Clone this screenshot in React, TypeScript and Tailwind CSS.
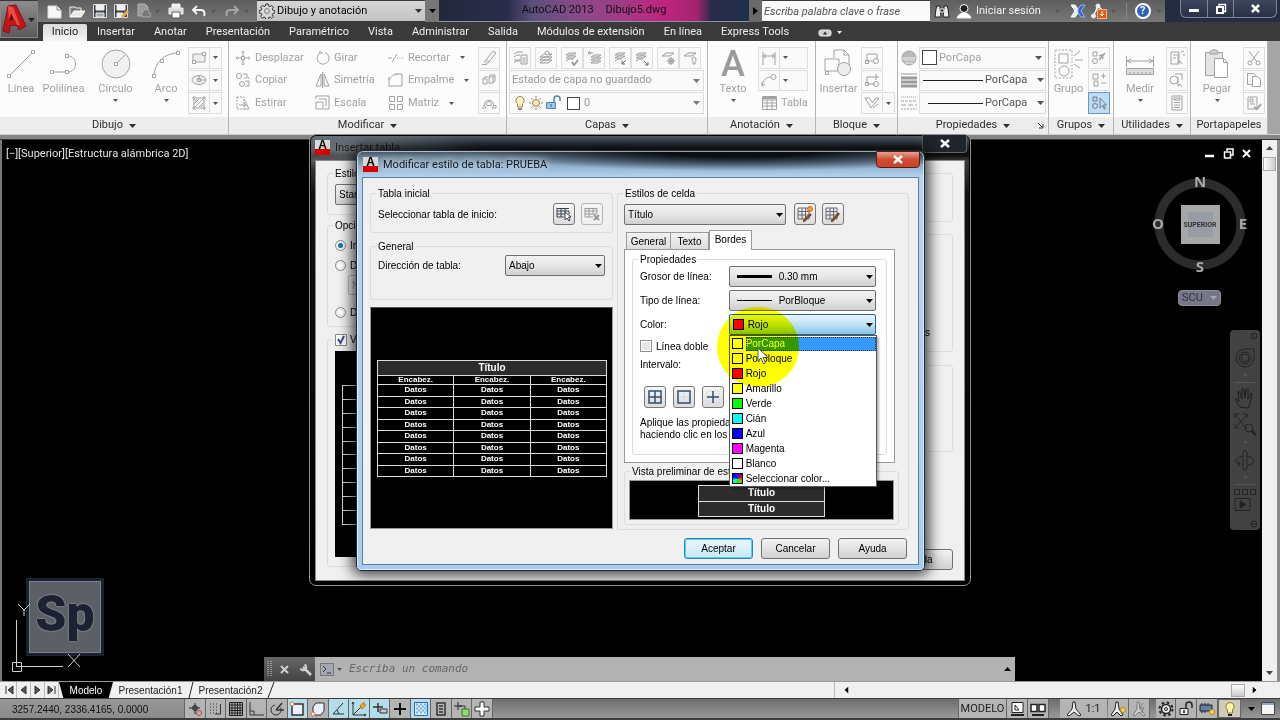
import { useState } from "react";
import type { ReactNode } from "react";

function Svg({ w = 16, h = 16, box, className = "", children }: { w?: number; h?: number; box?: string; className?: string; children: ReactNode }) {
  return (
    <svg width={w} height={h} viewBox={box ?? `0 0 ${w} ${h}`} fill="none" stroke="currentColor" strokeWidth="1" className={`shrink-0 ${className}`} aria-hidden="true">
      {children}
    </svg>
  );
}

function Caret({ className = "" }: { className?: string }) {
  return (
    <svg width="7" height="4" viewBox="0 0 7 4" className={`shrink-0 ${className}`} aria-hidden="true">
      <path d="M0 0h7L3.5 4z" fill="currentColor" />
    </svg>
  );
}

function SmallCaret() {
  return (
    <svg width="5" height="3" viewBox="0 0 5 3" className="shrink-0 text-[#555]" aria-hidden="true">
      <path d="M0 0h5L2.5 3z" fill="currentColor" />
    </svg>
  );
}

/* ---------- ribbon ---------- */

function Panel({ title, className, children, arrow = true, launcher = false }: { title: string; className: string; children: ReactNode; arrow?: boolean; launcher?: boolean }) {
  return (
    <section className={`flex shrink-0 flex-col border-r border-[#b4b4b4] ${className}`}>
      <div className="flex h-[76px] items-stretch pt-[6px] pb-[3px] text-[#a2a2a2]">{children}</div>
      <div className="relative flex h-[17px] items-center justify-center gap-[6px] bg-[#ededed] text-[#2e2e2e]">
        <span>{title}</span>
        {arrow && <Caret />}
        {launcher && (
          <Svg w={7} h={7} className="absolute right-1">
            <path d="M1 1l4 4M6 2v4H2" />
          </Svg>
        )}
      </div>
    </section>
  );
}

function BigTool({ label, icon, arrow = false, className = "" }: { label: string; icon: ReactNode; arrow?: boolean; className?: string }) {
  return (
    <button className={`flex flex-col items-center ${className}`}>
      <span className="flex h-[34px] items-center">{icon}</span>
      <span className="leading-[16px]">{label}</span>
      {arrow && <span className="mt-[2px]"><SmallCaret /></span>}
    </button>
  );
}

function Tool({ label, icon, arrow = false }: { label: string; icon: ReactNode; arrow?: boolean }) {
  return (
    <button className="flex items-center gap-[4px] text-left">
      {icon}
      <span>{label}</span>
      {arrow && <span className="ml-[6px]"><SmallCaret /></span>}
    </button>
  );
}

function Box({ name, children, arrow = false, active = false }: { name: string; children: ReactNode; arrow?: boolean; active?: boolean }) {
  return (
    <button aria-label={name} className={active ? "flex w-[22px] items-center border border-[#5d9bd0] bg-[#bfdcf3] text-[#6d7c8c]" : "flex items-center border border-[#dedede] bg-[#fafafa]"}>
      <span className="flex w-[20px] items-center justify-center">{children}</span>
      {arrow && <span className="flex w-[12px] items-center justify-center self-stretch border-l border-[#dedede]"><SmallCaret /></span>}
    </button>
  );
}

function Rows({ className = "", children }: { className?: string; children: ReactNode }) {
  return <div className={`grid grid-rows-3 gap-px ${className}`}>{children}</div>;
}

const layerIcons: [string, ReactNode, string][] = [
  ["Propiedades de capas", <><path d="M2 4l3-2h6M2 7l3-2h3M2 10h6M2 13l2-2h4" /><path d="M9 5h6v9H9zM10.500 8h3M10.500 10h3M10.500 12h3" /></>, "mr-1"],
  ["Definir como actual", <><path d="M2 7l4-3h8l-4 3zM2 10l4-3h8l-4 3zM2 13l4-3h8l-4 3z" /><circle cx="9" cy="3" r="2" fill="#fff" /></>, "mr-1"],
  ["Igualar", <><path d="M2 5l3-2h7l-3 2zM2 8l3-2h7l-3 2zM2 11l3-2h5" /><path d="M8 12l2 3 4-5" strokeWidth="2" /></>, ""],
  ["Anterior", <><path d="M5 7l3-2h7l-3 2zM5 10l3-2h7l-3 2zM5 13l3-2h7l-3 2z" /><path d="M5 4l-3-1 2-2M2 3h5" /></>, "mr-1"],
  ["Aislar", <><path d="M3 5l3-2h7l-3 2zM3 8l3-2h7l-3 2zM3 11l3-2h4" /><path d="M14 10l-4 4M10 11v3h3" stroke="#666" /></>, ""],
  ["Desaislar", <><path d="M2 5l3-2h7l-3 2zM2 8l3-2h7l-3 2zM2 11l3-2h4" /><path d="M10 11l4 4M14 12v3h-3" stroke="#666" /></>, "mr-1"],
  ["Inutilizar", <><path d="M2 6l4-3h8l-4 3z" /><circle cx="11" cy="11" r="2.500" /><path d="M11 7v8M7 11h8M8.500 8.500l5 5M13.500 8.500l-5 5" /></>, ""],
  ["Desactivar", <><path d="M2 6l4-3h8l-4 3z" /><path d="M12 7a2.500 2.500 0 011 4.500V14h-2v-2.500A2.500 2.500 0 0112 7z" /></>, ""],
];

function Ribbon() {
  return (
    <div className="flex border-b border-[#d0d0d0] bg-[#fcfcfc] text-[11px]">
      <Panel title="Dibujo" className="w-[229px]">
        <BigTool className="w-[42px]" label="Línea" icon={<Svg w={30} h={30}><path d="M4 26L26 4" /><path d="M1.500 25.500h3v3h-3zM25.500 1.500h3v3h-3z" fill="#fff" /></Svg>} />
        <BigTool className="w-[43px]" label="Polilínea" icon={<Svg w={30} h={30}><path d="M3 23h16c10 0 10-16 0-16h-1" /><path d="M1.500 21.500h3v3h-3zM16.500 21.500h3v3h-3zM16.500 5.500h3v3h-3z" fill="#fff" /></Svg>} />
        <BigTool className="w-[61px]" arrow label="Círculo" icon={<Svg w={30} h={30}><circle cx="15" cy="15" r="14" fill="#f1f1f1" /><path d="M15 15l9-9" /><path d="M13.500 13.500h3v3h-3z" fill="#fff" /></Svg>} />
        <BigTool className="w-[40px]" arrow label="Arco" icon={<Svg w={30} h={30}><path d="M3 26C4 13 14 4 27 4" /><path d="M1.500 25.500h3v3h-3zM9.500 10.500h3v3h-3zM25.500 2.500h3v3h-3z" fill="#fff" /></Svg>} />
        <Rows className="ml-[2px]">
          <Box name="Rectángulo" arrow><Svg><path d="M2 4h12v8H2z" fill="#eee" /><path d="M1.500 10.500h3v3h-3zM11.500 2.500h3v3h-3z" fill="#fff" /></Svg></Box>
          <Box name="Elipse" arrow><Svg><ellipse cx="8" cy="8" rx="7" ry="4.500" fill="#eee" /><path d="M8 8h6M8 3v5M6.500 6.500h3v3h-3z" /></Svg></Box>
          <Box name="Sombreado" arrow><Svg><path d="M3 1v14M13 1v14M1 3h14M1 13h14M4 8l4-4M4 12l8-8M8 12l4-4M4 6l2-2M10 12l2-2" /></Svg></Box>
        </Rows>
      </Panel>

      <Panel title="Modificar" className="w-[278px]">
        <Rows className="ml-[6px] w-[80px]">
          <Tool label="Desplazar" icon={<Svg><path d="M8 1v5M8 10v5M1 8h5M10 8h5M6.500 2.500L8 1l1.500 1.500M6.500 13.500L8 15l1.500-1.500M2.500 6.500L1 8l1.500 1.500M13.500 6.500L15 8l-1.500 1.500M6.500 6.500h3v3h-3z" /></Svg>} />
          <Tool label="Copiar" icon={<Svg><circle cx="4" cy="4" r="2.500" /><path d="M8 2h4v4H9M13 5l1.500 2" /><circle cx="7" cy="12" r="2.500" /><path d="M10 9h4v5h-4" /></Svg>} />
          <Tool label="Estirar" icon={<Svg><path d="M2 2h7v12H2z" strokeDasharray="2 1" /><path d="M9 4l5 10H9M4 10h7M9 8l2 2-2 2" /></Svg>} />
        </Rows>
        <Rows className="w-[73px]">
          <Tool label="Girar" icon={<Svg w={15}><path d="M5 3a6 6 0 105-.5M5 3V.5M5 3h3" /></Svg>} />
          <Tool label="Simetría" icon={<Svg w={15}><path d="M6 2v12H1zM9 2v12h5zM7.500 0v16" /></Svg>} />
          <Tool label="Escala" icon={<Svg w={15}><path d="M1 1h13v13H9M1 7h7v7H1zM1 4V1M4 4h7v7" /></Svg>} />
        </Rows>
        <Rows className="w-[90px]">
          <Tool label="Recortar" arrow icon={<Svg><path d="M0 8h4M4 12l5-8M9 8h1M11.500 8h1M14 8h1" /></Svg>} />
          <Tool label="Empalme" arrow icon={<Svg><path d="M1 14V8c2-4 5-6 9-6h4v12z" /><path d="M1 8V5M10 2H7" /></Svg>} />
          <Tool label="Matriz" arrow icon={<Svg><path d="M1.500 1.500h5v5h-5zM9.500 1.500h5v5h-5zM1.500 9.500h5v5h-5zM9.500 9.500h5v5h-5z" /></Svg>} />
        </Rows>
        <Rows>
          <Box name="Borrar"><Svg><path d="M5 10l7-9 3 2-7 9zM5 10c-2 1-2 3 0 3s3 0 3-1M1 14.500h5" /></Svg></Box>
          <Box name="Descomponer"><Svg><path d="M2 7h4v5H2zM8 5h4v6H8zM2 7l2-2h3M8 5l1-2h5v6l-2 2M12 5l2-2" /></Svg></Box>
          <Box name="Desfase"><Svg><path d="M1 13h4a4.500 4.500 0 116 0h4v-2.500h-3" /><path d="M4 10.500H2M6 10.500a2.500 2.500 0 114 0H6z" /></Svg></Box>
        </Rows>
      </Panel>

      <Panel title="Capas" className="w-[201px]">
        <Rows className="ml-[2px] w-[195px] text-[#9a9a9a]">
          <div className="flex">
            {layerIcons.map(([name, art, gap]) => (
              <span key={name} className={`flex ${gap}`}><Box name={name}><Svg>{art}</Svg></Box></span>
            ))}
          </div>
          <div className="relative">
            <select aria-label="Estado de capa" className="block h-full w-full appearance-none border border-[#dcdcdc] bg-[#fafafa] pl-[2px] text-[11px] leading-[14px]">
              <option>Estado de capa no guardado</option>
            </select>
            <Caret className="absolute top-[9px] right-[4px] text-[#777]" />
          </div>
          <div className="relative flex items-center border border-[#dcdcdc] bg-[#fafafa] pl-[3px]">
            <Svg w={14} className="text-[#8e8a74]"><path d="M7 1.500a4 4 0 012.500 7.200V12h-5V8.700A4 4 0 017 1.500z" fill="#fdf3b4" /><path d="M5 14h4" strokeWidth="2" /></Svg>
            <Svg w={18} box="-1 0 18 16" className="text-[#87826a]"><circle cx="8" cy="8" r="3.500" fill="#ffe9a0" /><path d="M8 1v2M8 13v2M1 8h2M13 8h2M3 3l1.500 1.500M11.500 11.500L13 13M13 3l-1.500 1.500M4.500 11.500L3 13" /></Svg>
            <Svg className="text-[#4d86a8]"><path d="M1.500 7.500h9v6h-9z" fill="#9cc7e0" /><path d="M9 7V4a3 3 0 016 0v2M6 9v3" strokeWidth="1.500" /></Svg>
            <span className="ml-[6px] h-[13px] w-[13px] border border-[#444] bg-white" />
            <select aria-label="Capa" className="ml-[4px] flex-1 appearance-none text-[11px]"><option>0</option></select>
            <Caret className="absolute right-[3px] text-[#777]" />
          </div>
        </Rows>
      </Panel>

      <Panel title="Anotación" className="w-[108px]">
        <BigTool className="w-[50px]" arrow label="Texto" icon={<span className="text-[36px] leading-[34px] font-medium text-[#9b9b9b]">A</span>} />
        <Rows>
          <Box name="Cota lineal" arrow><Svg><path d="M2 2v13M14 2v13M2 6h12M5 4L2 6l3 2M11 4l3 2-3 2" /></Svg></Box>
          <Box name="Directriz" arrow><Svg><path d="M1 14c1-6 4-9 9-9M1 14l3-2M1 14V10" /><circle cx="12.500" cy="5" r="2.500" /></Svg></Box>
          <span className="ml-[4px] flex"><Tool label="Tabla" icon={<Svg w={15}><path d="M.5 1.500h14v13H.5zM.5 5h14M.5 8h14M.5 11h14M5 5v9M10 5v9" /><path d="M1 2.500h13" strokeWidth="3" /></Svg>} /></span>
        </Rows>
      </Panel>

      <Panel title="Bloque" className="w-[82px]">
        <BigTool className="w-[45px]" label="Insertar" icon={<Svg w={30} h={30}><path d="M10 9V1h10l5 5v13M20 1v5h5M1 10h14v12H1z" /><circle cx="20" cy="20" r="6.500" fill="#eee" /><path d="M1.500 22.500h3v3h-3z" /></Svg>} />
        <Rows className="justify-items-start">
          <Box name="Crear bloque"><Svg><path d="M3 11V4h10v5M3 11h6" /><path d="M1.500 10.500h3v3h-3z" /><circle cx="12" cy="11" r="2.500" /></Svg></Box>
          <Box name="Editar bloque"><Svg><path d="M3 11V5h6M3 12h8" /><circle cx="12" cy="12" r="2.500" /><path d="M12 2v6M9 5h6M1.500 10.500h3v3h-3z" /></Svg></Box>
          <Box name="Editar atributos" arrow><Svg><path d="M1 3h4l4 5M1 3l6 10 8-10h-3L8 8M9 13l5-4" /></Svg></Box>
        </Rows>
      </Panel>

      <Panel title="Propiedades" launcher className="w-[151px]">
        <div className="grid w-[21px] grid-rows-3 place-items-center gap-px">
          <Svg><circle cx="8" cy="8" r="7" fill="#b9b9b9" /><path d="M1 8h14M2 10h12M4 13h8" stroke="#eee" /></Svg>
          <Svg><path d="M0 2h16" stroke="#999" /><path d="M0 6h16M0 10h16M0 14h16" stroke="#999" strokeWidth="3" /></Svg>
          <Svg><path d="M0 2h16" stroke="#999" strokeDasharray="1 1" /><path d="M0 6h16" strokeDasharray="3 1" /><path d="M0 10h16" strokeDasharray="5 2" /><path d="M0 14h16" strokeDasharray="2 1" /></Svg>
        </div>
        <Rows className="mr-[2px] flex-1">
          <div className="relative flex items-center border border-[#dcdcdc] bg-[#fafafa]">
            <span className="ml-[2px] h-[15px] w-[15px] border border-[#444] bg-white" />
            <select aria-label="Color del objeto" className="ml-[2px] flex-1 appearance-none text-[11px]"><option>PorCapa</option></select>
            <Caret className="absolute right-[3px] text-[#555]" />
          </div>
          {["Grosor", "Tipo"].map((n) => (
            <div key={n} className="relative flex items-center border border-[#dcdcdc] bg-[#fafafa] text-[#555]">
              <span className={n === "Grosor" ? "ml-[3px] w-[60px] border-t border-[#222]" : "ml-[8px] w-[55px] border-t border-[#222]"} />
              <select aria-label={n} className="ml-[2px] w-[52px] appearance-none text-[11px]"><option>PorCapa</option></select>
              <Caret className="absolute right-px text-[#555]" />
            </div>
          ))}
        </Rows>
      </Panel>

      <Panel title="Grupos" className="w-[65px]">
        <BigTool className="w-[39px]" label="Grupo" icon={<Svg w={30} h={30}><path d="M1 1h17v28H1z" strokeDasharray="2 1.500" /><path d="M5 5h9v9H5z" /><circle cx="10" cy="22" r="5" /><path d="M20 7l6-5M21 11h8M20 15l6 4" /></Svg>} />
        <Rows>
          <Box name="Desagrupar"><Svg><path d="M2 2h4v4H2z" /><circle cx="4" cy="11" r="2.500" /><path d="M8 10l6-7M8 6l3-1 1 4" strokeWidth="1.500" /></Svg></Box>
          <Box name="Editar grupo"><Svg><path d="M2 2h5v5H2zM3 9h4v5H3zM10 4h5M12.500 1.500v5M10 11h5" /></Svg></Box>
          <Box name="Selección de grupo" active><Svg><path d="M2 2h4v4H2z" /><circle cx="4" cy="11" r="2.500" /><path d="M9 3v10l2.500-2.500 2 4 1-1-2-3.500h3z" /></Svg></Box>
        </Rows>
      </Panel>

      <Panel title="Utilidades" className="w-[77px]">
        <BigTool className="w-[52px]" arrow label="Medir" icon={<Svg w={30} h={30}><path d="M1.500 7v11M28.500 7v11M2 12h26M6 10l-4 2 4 2M24 10l4 2-4 2" /><path d="M1.500 19.500h27v6h-27z" fill="#ddd" /><path d="M5 23v3M9 23v3M13 23v3M17 23v3M21 23v3M25 23v3" /></Svg>} />
        <Rows>
          <Box name="Selección rápida"><Svg><path d="M2 2h8v12H2zM4 5h4M4 8h3" /><path d="M9 4v9l2-2 2 3M12 2l3-1M14 5h2" /></Svg></Box>
          <Box name="Seleccionar todo"><Svg><circle cx="5" cy="8" r="4" /><path d="M6 2h7v6" /><path d="M9 5v9l2-2 2 3" /></Svg></Box>
          <Box name="Calculadora"><Svg><path d="M3 1h10v14H3zM5 3h6v2H5zM5 7.500h6M5 10h6M5 12.500h6" /></Svg></Box>
        </Rows>
      </Panel>

      <Panel title="Portapapeles" arrow={false} className="w-[77px]">
        <BigTool className="w-[52px]" arrow label="Pegar" icon={<Svg w={26} h={30}><path d="M1.500 3.500h17v23h-17z" fill="#e4e4e4" /><path d="M6 3c0-3 8-3 8 0v2H6z" fill="#ccc" /><path d="M10.500 9.500h9l4 4v15h-13z" fill="#fff" /><path d="M19.500 9.500v4h4" /></Svg>} />
        <Rows>
          <Box name="Cortar"><Svg><path d="M3 1l8 11M13 1L5 12" /><circle cx="4" cy="13" r="2" /><circle cx="12" cy="13" r="2" /></Svg></Box>
          <Box name="Copiar clip"><Svg><path d="M1.500 1.500h6l2 2v9h-8z" /><path d="M6.500 4.500h5l3 3v7h-8z" fill="#fff" /></Svg></Box>
          <Box name="Igualar propiedades"><Svg><path d="M2 2h9v12H2zM4 4h3v3H4zM4 9h5" /><path d="M8 12l3 2 4-5" strokeWidth="2" /></Svg></Box>
        </Rows>
      </Panel>
      <div className="flex-1 bg-[#a5a5a5]" />
    </div>
  );
}

/* ---------- title bar ---------- */

const menus = ["Insertar", "Anotar", "Presentación", "Paramétrico", "Vista", "Administrar", "Salida", "Módulos de extensión", "En línea", "Express Tools"];

function QuickAccess() {
  return (
    <div className="flex w-[219px] shrink-0 items-center bg-linear-to-b from-[#5e5e5e] to-[#787878] pl-[8px] text-[#eee]">
      <button aria-label="Nuevo" className="w-[23px]"><Svg><path d="M2 3h9l4 4v8H2z" fill="#f7f7f7" stroke="#ddd" /><path d="M11 3v4h4" stroke="#888" /></Svg></button>
      <button aria-label="Abrir" className="w-[23px]"><Svg><path d="M1 14V4h5l1 1h5v3" fill="#777" /><path d="M1 14l4-6h11l-4 6z" fill="#e9e9e9" stroke="#fff" /></Svg></button>
      <button aria-label="Guardar" className="w-[21px]"><Svg><path d="M1.500 1.500h13v13h-13z" fill="#3a4250" stroke="#ddd" /><path d="M4 2h8v5H4z" fill="#eee" /><path d="M4 10h8v4H4z" fill="#aaa" /></Svg></button>
      <button aria-label="Guardar como" className="w-[24px]"><Svg><path d="M1.500 1.500h13v13h-13z" fill="#3a4250" stroke="#ddd" /><path d="M4 2h8v5H4zM4 10h6v4H4z" fill="#eee" /><path d="M9 14l6-6" stroke="#f2a63c" strokeWidth="3" /></Svg></button>
      <button aria-label="Publicar" className="w-[18px]"><Svg w={14}><path d="M1 1h7l3 3v9H1z" fill="#9a9a9a" stroke="#b4b4b4" /><path d="M6 14a3 3 0 010-5 3 3 0 016 1 2 2 0 010 4z" fill="#777" stroke="#aaa" /></Svg></button>
      <SmallCaret />
      <button aria-label="Trazar" className="ml-[8px] w-[23px]"><Svg><path d="M4 1h8v4H4z" fill="#eee" /><path d="M1 5h14v6H1z" fill="#ddd" /><path d="M4 9h8v6H4z" fill="#fff" stroke="#555" /></Svg></button>
      <button aria-label="Deshacer" className="w-[20px]"><Svg><path d="M6 3L2 7l4 4M2 7h8c4 0 4 4 3 6" strokeWidth="2" stroke="#f4f4f4" /></Svg></button>
      <SmallCaret />
      <button aria-label="Rehacer" className="ml-[8px] w-[20px]"><Svg><path d="M10 3l4 4-4 4M14 7H6c-4 0-4 4-3 6" strokeWidth="2" stroke="#a5a5a5" /></Svg></button>
      <SmallCaret />
    </div>
  );
}

function TitleBar() {
  return (
    <div className="flex h-[22px] text-[11px]">
      <QuickAccess />
      <div className="relative my-px w-[168px] shrink-0 text-black">
        <select aria-label="Espacio de trabajo" className="h-full w-full appearance-none bg-linear-to-b from-[#d6d6d6] to-[#c3c3c3] pl-[20px]"><option>Dibujo y anotación</option></select>
        <Svg className="absolute top-[2px] left-[2px] text-[#333]"><circle cx="8" cy="8" r="2.500" /><path d="M6.800 1h2.400l.4 2 1.400.6 1.700-1.200 1.700 1.700-1.200 1.700.6 1.400 2 .4v2.400l-2 .4-.6 1.400 1.200 1.700-1.700 1.700-1.700-1.200-1.400.6-.4 2H6.800l-.4-2-1.400-.6-1.700 1.200-1.700-1.700 1.200-1.700-.6-1.400-2-.4V7.600l2-.4.6-1.400L1.600 4.100l1.700-1.700L5 3.600 6.400 3z" fill="#eee" fillRule="evenodd" fillOpacity=".4" /></Svg>
        <Caret className="absolute top-[8px] right-[3px] text-[#333]" />
      </div>
      <button aria-label="Personalizar barra" className="flex w-[14px] shrink-0 items-center justify-center bg-[#777] text-black"><Caret /></button>
      <div className="flex min-w-0 flex-1 items-center justify-center gap-[12px] border-b border-[#8a90a8] bg-[linear-gradient(90deg,#22273c_0%,#2a2d4a_22%,#5c4f7c_30%,#8a4a88_45%,#a03c86_58%,#c02480_72%,#a52370_83%,#272b49_88%,#1f2f4c_100%)] text-[#101018]">
        <span>AutoCAD 2013</span>
        <span>Dibujo5.dwg</span>
      </div>
      <button aria-label="Ocultar búsqueda" className="flex w-[13px] shrink-0 items-center justify-center bg-[#6a6a6a] text-black"><Svg w={5} h={8}><path d="M0 0l5 4-5 4z" fill="currentColor" stroke="none" /></Svg></button>
      <input aria-label="Buscar" placeholder="Escriba palabra clave o frase" className="my-px w-[168px] shrink-0 bg-[#fafafa] pt-[3px] pl-[2px] italic placeholder:text-[#555]" />
      <div className="flex w-[235px] shrink-0 items-center bg-linear-to-b from-[#5e5e5e] to-[#787878] text-[#f2f2f2]">
        <button aria-label="Búsqueda" className="ml-[4px] w-[22px]"><Svg><path d="M3 3h3v3l1 8H1l1-8zM10 3h3l1 3 1 8H9l1-8z" fill="#eee" stroke="#222" /><path d="M6 6h4v3H6z" fill="#222" /></Svg></button>
        <button className="flex items-center gap-[4px]">
          <Svg><circle cx="8" cy="5.500" r="4" fill="#222" stroke="#fff" /><path d="M1 15c1-4 4-4 5-5h4c1 1 4 1 5 5z" fill="#fff" /></Svg>
          <span>Iniciar sesión</span>
        </button>
        <span className="mr-[10px] ml-[14px]"><SmallCaret /></span>
        <button aria-label="Exchange" className="w-[21px]"><Svg><path d="M1 2h4l3 4v4l-3 4H1l4-6z" fill="#e8eefc" stroke="#fff" /><path d="M15 2h-4L8 6v4l3 4h4l-4-6z" fill="#3567c8" stroke="#9ab8f2" /></Svg></button>
        <button aria-label="Autodesk 360" className="w-[20px]"><Svg><path d="M2 14L7 3l4 4" stroke="#fff" strokeWidth="1.500" /><circle cx="7" cy="3" r="2" fill="#eee" /><circle cx="2.500" cy="13" r="2" fill="#eee" /><path d="M6.500 6.500h9v9h-9z" fill="#e05a14" stroke="#ffb080" /><path d="M11 8v5M9 11l2 2 2-2" stroke="#fff" /></Svg></button>
        <SmallCaret />
        <span className="mr-[8px] ml-[10px] h-[16px] w-px bg-[#888]" />
        <button aria-label="Ayuda" className="flex h-[16px] w-[16px] items-center justify-center rounded-full border-2 border-white bg-[#2c64b8] font-bold">?</button>
        <span className="ml-[6px]"><SmallCaret /></span>
      </div>
      <div className="flex w-[115px] shrink-0 items-start justify-end bg-[#242c42] pr-[3px] text-white">
        <div className="flex h-[18px] w-[97px] rounded-b-md border border-t-0 border-[#7d879c] bg-linear-to-b from-[#3c455c] to-[#2a3147]">
          <button aria-label="Minimizar" className="flex w-[27px] items-center justify-center border-r border-[#7d879c]"><Svg w={12} h={12}><path d="M1.500 6.500h9v2h-9z" fill="#fff" stroke="#fff" /></Svg></button>
          <button aria-label="Restaurar" className="flex w-[26px] items-center justify-center border-r border-[#7d879c]"><Svg w={12} h={12}><path d="M4 3V1.500h6.500v7H9" strokeWidth="1.500" /><path d="M2 4h6v6H2z" strokeWidth="2" /></Svg></button>
          <button aria-label="Cerrar" className="flex flex-1 items-center justify-center"><Svg w={9} h={9}><path d="M1 1l7 7M8 1L1 8" strokeWidth="2.500" /></Svg></button>
        </div>
      </div>
    </div>
  );
}

function Header() {
  return (
    <header className="flex h-[41px] bg-[#3a3a3a]">
      <button aria-label="Menú de la aplicación" className="mt-px flex h-[37px] w-[38px] shrink-0 items-center border border-[#888] bg-linear-to-b from-[#8c8c8c] to-[#5a5a5a]">
        <Svg w={26} h={34}>
          <path d="M7 3l8-1 10 21-7 4-2-5-7 1-1 7-6-2z" fill="#c3141c" stroke="#8d0c12" />
          <path d="M7 3l5 1 7 18h-3l-2-5-6 1z" fill="#ee4a44" stroke="none" />
          <path d="M8 18l2-8 3 7z" fill="#5e070b" stroke="none" />
        </Svg>
        <Caret className="ml-px text-[#222]" />
      </button>
      <div className="min-w-0 flex-1">
        <TitleBar />
        <nav className="flex h-[19px] items-stretch pt-[2px] pl-[5px] text-[11px] text-[#eee]">
          <button className="w-[44px] rounded-t-xs bg-linear-to-b from-[#d9d9d9] to-[#f6f6f6] text-[#222]">Inicio</button>
          {menus.map((m) => (
            <button key={m} className="ml-px px-[9px] whitespace-nowrap">{m}</button>
          ))}
          <button aria-label="Minimizar cinta" className="ml-[20px] flex items-center gap-[5px]">
            <Svg w={14} h={8}><rect x="1" y="1" width="12" height="6" rx="2" fill="#ccc" stroke="#eee" /><path d="M5 5.500l2-3 2 3z" fill="#222" stroke="none" /></Svg>
            <svg width="5" height="3" viewBox="0 0 5 3" aria-hidden="true"><path d="M0 0h5L2.500 3z" fill="currentColor" /></svg>
          </button>
        </nav>
      </div>
    </header>
  );
}

/* ---------- drawing area ---------- */

function ViewTools() {
  return (
    <div className="flex flex-col items-end pr-[2px] text-[#999]">
      <div className="mt-[8px] mr-[9px] flex items-center gap-[8px] text-white">
        <button aria-label="Minimizar vista"><Svg w={11} h={11}><path d="M1 8h9" strokeWidth="2.500" /></Svg></button>
        <button aria-label="Restaurar vista"><Svg w={11} h={11}><path d="M4 3V1h6v6H8M1.500 4h6v6h-6z" strokeWidth="1.500" /></Svg></button>
        <button aria-label="Cerrar vista"><Svg w={9} h={9}><path d="M1 1l7 7M8 1L1 8" strokeWidth="2" /></Svg></button>
      </div>
      <svg width="100" height="104" viewBox="0 0 100 104" className="mt-[13px] mr-[10px]" role="img" aria-label="ViewCube">
        <circle cx="50" cy="52" r="41" fill="none" stroke="#2c2c2c" strokeWidth="9" />
        <rect x="31" y="33" width="39" height="39" fill="#a7a7a7" />
        <rect x="38" y="40" width="25" height="25" fill="#989ca4" />
        <g fontFamily="Open Sans, sans-serif" fontWeight="700" fontSize="15" fill="#a9a9a9" textAnchor="middle">
          <text x="50" y="15">N</text>
          <text x="50" y="100">S</text>
          <text x="8" y="57">O</text>
          <text x="93" y="57">E</text>
        </g>
        <text x="50" y="55" fontFamily="Roboto, sans-serif" fontWeight="700" fontSize="7" fill="#333" textAnchor="middle">SUPERIOR</text>
      </svg>
      <button className="mt-[14px] mr-[39px] flex h-[16px] w-[43px] items-center justify-between rounded-[4px] border border-[#8c8c98] bg-[#77778a] px-[3px] text-[11px] text-[#30303a]">
        <span>SCU</span>
        <span className="text-[#a6a6b4]"><Caret /></span>
      </button>
      <div className="mt-[24px] flex w-[30px] flex-col items-center rounded-[4px] bg-[#424242] py-[2px] text-[#222]">
        <Svg w={8} h={8} className="mr-[2px] self-end"><circle cx="4" cy="4" r="3" /><path d="M2.500 2.500l3 3" /></Svg>
        <button aria-label="Rueda de navegación" className="mt-[7px]"><Svg w={22} h={22}><path d="M2 11a9 9 0 019-9h9v9a9 9 0 01-18 0z" /><circle cx="11" cy="11" r="6" /><circle cx="11" cy="11" r="4" /></Svg></button>
        <span className="my-[5px]"><SmallCaret /></span>
        <button aria-label="Encuadre" className="border-t border-[#555] pt-[3px]"><Svg w={22} h={24} className="text-[#1c1c1c]"><path d="M6 21c-2-3-4-6-5-8 1-1 2 0 4 3L4 6c1-1 2 0 2 1l2 6L8 3c1-1 2 0 2 1l1 8 1-9c1-1 2 0 2 1v9l3-6c1 0 2 1 1 2l-2 8-2 5z" /></Svg></button>
        <button aria-label="Zoom" className="mt-[2px]"><Svg w={22} h={24}><path d="M1 3l12 14M13 3L2 15M1 6V2h4M9 2h4v4M1 12v4h4" /><circle cx="15" cy="16" r="4" /><path d="M18 19l4 4" strokeWidth="2.500" /></Svg></button>
        <span className="my-[5px]"><SmallCaret /></span>
        <button aria-label="Órbita"><Svg w={22} h={22}><path d="M9 3l2-2 2 2v17l-2 1-2-1zM9 7C0 9 0 14 6 15l-2-3M6 15l-3 2M13 7c9 2 9 8 1 9" /></Svg></button>
        <span className="my-[5px]"><SmallCaret /></span>
        <button aria-label="ShowMotion" className="border-t border-[#555] pt-[3px]"><Svg w={22} h={24}><path d="M.5 1.500h5v5h-5zM8.500 1.500h5v5h-5zM16.500 1.500h5v5h-5zM1 10.500h15v12H1z" /><path d="M6 13l6 3.500-6 3.500z" fill="#222" /></Svg></button>
        <Svg w={8} h={8} className="mt-[8px] mr-[2px] self-end"><circle cx="4" cy="4" r="3" /><path d="M2 4h4" /></Svg>
      </div>
    </div>
  );
}

function DrawingArea() {
  return (
    <main className="relative flex min-h-0 flex-1 border-l-2 border-[#777] bg-black">
      <span className="mt-[6px] ml-[4px] flex-1 text-[11px] text-[#e4e4e4]">[−][Superior][Estructura alámbrica 2D]</span>
      <ViewTools />
      <div className="flex w-[15px] flex-col items-center bg-[#f0f0f0] py-[6px] text-[#444]">
        <Caret className="rotate-180" />
        <span className="mt-[7px] h-[14px] w-[13px] border border-[#aaa] bg-linear-to-r from-white to-[#ccc]" />
        <Caret className="mt-auto" />
      </div>
      <div className="w-[3px] bg-[#8a8a8a]" />

      <div className="absolute bottom-[25px] left-[24px] flex h-[78px] w-[78px] items-center justify-center border-[3px] border-[#1c2132] bg-[#5d5f66] text-[50px] leading-none font-black text-[#1d2233] shadow-[inset_0_0_0_1px_#7b7f8c]">
        <span className="pb-[6px] [text-shadow:0_0_1px_#a4a8b4,0_0_2px_#a4a8b4]">Sp</span>
      </div>
      <svg width="76" height="74" viewBox="0 0 76 74" className="absolute bottom-[7px] left-[6px]" fill="none" stroke="#cfcfcf" aria-hidden="true">
        <path d="M8.500 20v47M9 66.500h46M4.500 62.500h9v9h-9zM10 4l6 6v6M22 4l-6 6M60 54l12 13M72 54L60 67" />
      </svg>

      <div className="absolute bottom-0 left-[262px] flex h-[24px] w-[751px] items-stretch">
        <div className="flex w-[51px] items-center gap-[7px] bg-linear-to-b from-[#666] to-[#444] pl-[3px] text-[#d0d0d0]">
          <Svg w={6}><path d="M1 0v16M4 0v16" strokeDasharray="1 1" /></Svg>
          <button aria-label="Cerrar línea de comandos"><Svg w={9} h={9}><path d="M1 1l7 7M8 1L1 8" strokeWidth="2" /></Svg></button>
          <button aria-label="Personalizar" className="ml-[3px]"><Svg w={13} h={13}><path d="M4 4l8 8" strokeWidth="2.500" /><path d="M5.500 1.500a3 3 0 11-4 4" strokeWidth="2" /></Svg></button>
        </div>
        <div className="flex flex-1 items-center bg-[#b2b2b2] pl-[5px] text-[#333]">
          <span className="flex h-[13px] w-[14px] items-center justify-center border border-[#777] bg-[#a3a7b0]"><Svg w={10} h={9}><path d="M1 1l3 3-3 3M5 8h4" /></Svg></span>
          <span className="ml-[3px]"><SmallCaret /></span>
          <input aria-label="Comando" placeholder="Escriba un comando" className="ml-[7px] flex-1 bg-transparent font-['DejaVu_Sans_Mono',monospace] text-[11px] italic outline-none placeholder:text-[#666]" />
          <Caret className="mr-[4px] rotate-180 text-black" />
        </div>
      </div>
    </main>
  );
}

/* ---------- dialogs ---------- */

function Group({ title, className = "", inner = "", children }: { title?: ReactNode; className?: string; inner?: string; children?: ReactNode }) {
  return (
    <fieldset className={`min-w-0 rounded-[3px] border border-[#dadde0] ${className}`}>
      {title && <legend className="ml-[5px] px-[2px] leading-[13px]">{title}</legend>}
      <div className={inner}>{children}</div>
    </fieldset>
  );
}

function Combo({ id, value, className = "", pad = "pl-[3px]", blue = false, children }: { id: string; value: string; className?: string; pad?: string; blue?: boolean; children?: ReactNode }) {
  return (
    <div className={`relative h-[21px] ${className}`}>
      <select id={id} aria-label={id} className={`h-full w-full appearance-none rounded-[2px] border leading-[13px] ${blue ? "border-[#2c628b] bg-linear-to-b from-[#e8f5fc] via-[#bfe3f6] to-[#86c3e4]" : "border-[#707070] bg-linear-to-b from-[#f2f2f2] via-[#e6e6e6] to-[#cfcfcf]"} ${pad}`}>
        <option>{value}</option>
      </select>
      {children}
      <Caret className="absolute top-[9px] right-[3px] text-black" />
    </div>
  );
}

function PushButton({ children, primary = false }: { children: ReactNode; primary?: boolean }) {
  return (
    <button className={`h-[21px] w-[69px] rounded-[3px] border bg-linear-to-b ${primary ? "border-[#2d87b0] from-[#eef8fd] to-[#c6e9f8] shadow-[inset_0_0_0_1px_#52cdf5]" : "border-[#707070] from-[#f3f3f3] to-[#d2d2d2]"}`}>{children}</button>
  );
}

function IconButton({ name, faded = false, children }: { name: string; faded?: boolean; children: ReactNode }) {
  return (
    <button aria-label={name} className={`flex h-[22px] w-[22px] items-center justify-center rounded-[3px] border bg-linear-to-b ${faded ? "border-[#b5b5b5] from-[#f4f4f4] to-[#f0f0f0] text-[#999]" : "border-[#777] from-[#f6f6f6] to-[#dcdcdc] text-[#39424e]"}`}>{children}</button>
  );
}

function AcadIcon() {
  return (
    <span className="flex h-[15px] w-[15px] flex-col items-center bg-linear-to-b from-[#d8d8d8] from-60% to-[#d90000] to-60% text-[12px] leading-[11px] font-bold text-black">A</span>
  );
}

const colors: [string, string][] = [
  ["PorCapa", "bg-white"],
  ["PorBloque", "bg-white"],
  ["Rojo", "bg-[#f00]"],
  ["Amarillo", "bg-[#ff0]"],
  ["Verde", "bg-[#0f0]"],
  ["Cián", "bg-[#0ff]"],
  ["Azul", "bg-[#00f]"],
  ["Magenta", "bg-[#f0f]"],
  ["Blanco", "bg-white"],
  ["Seleccionar color...", "bg-[conic-gradient(#40f,#a04,#aa0,#0f0,#0ff,#00f,#40f)]"],
];

function ColorMenu() {
  const [active, setActive] = useState(0);
  return (
    <ul role="listbox" aria-label="Color" className="absolute top-[21px] left-0 z-10 w-[148px] border border-[#555] bg-white shadow-[2px_2px_2px_rgba(0,0,0,0.3)]">
      {colors.map(([name, swatch], i) => (
        <li key={name} role="option" aria-selected={i === active} onMouseEnter={() => setActive(i)} className="flex h-[15px] items-center gap-[3px] pl-[2px]">
          <span className={`h-[11px] w-[11px] border border-black ${swatch}`} />
          <span className={`flex-1 leading-[14px] ${i === active ? "bg-[#3399ff] text-white outline-1 -outline-offset-1 outline-dotted outline-[#333]" : ""}`}>{name}</span>
        </li>
      ))}
    </ul>
  );
}

function PreviewTable() {
  return (
    <table className="mx-[6px] mt-[52px] h-[117px] w-[230px] table-fixed border-collapse text-[8px] leading-[8px] font-bold text-white [&_td]:border [&_td]:border-[#ddd] [&_td]:p-0 [&_th]:border [&_th]:border-[#ddd] [&_th]:p-0">
      <thead>
        <tr><th colSpan={3} className="h-[15px] bg-[#2c2c2c] text-[10px] leading-[12px]">Título</th></tr>
        <tr>{[0, 1, 2].map((c) => <th key={c}>Encabez.</th>)}</tr>
      </thead>
      <tbody className="text-center">
        {Array.from({ length: 8 }, (_, r) => (
          <tr key={r}>{[0, 1, 2].map((c) => <td key={c}>Datos</td>)}</tr>
        ))}
      </tbody>
    </table>
  );
}

const borderIcons: [string, string][] = [
  ["Todos los bordes", "M2 2h12v12H2zM8 2v12M2 8h12"],
  ["Bordes exteriores", "M2 2h12v12H2z"],
  ["Bordes interiores", "M8 2v12M2 8h12"],
];

function StyleDialog() {
  return (
    <div role="dialog" aria-label="Modificar estilo de tabla" className="absolute top-[150px] left-[356px] w-[569px] rounded-t-[7px] rounded-b-[5px] border border-[#1d2936] bg-[radial-gradient(ellipse_260px_20px_at_380px_0px,rgba(5,10,15,0.95)_30%,rgba(5,10,15,0)_100%),linear-gradient(180deg,#3d4d5c_0px,#6c8296_6px,#93b3d0_16px,#b5d3f0_26px,#a9cdef_100%)] px-[5px] pb-[5px] shadow-[0_0_14px_4px_rgba(0,0,0,0.75),inset_0_0_0_1px_rgba(255,255,255,0.6)]">
      <div className="flex h-[26px] items-center">
        <span className="ml-px"><AcadIcon /></span>
        <h2 className="ml-[5px] font-['Roboto',sans-serif] text-[11px] text-[#101820] [text-shadow:0_0_6px_#d5e3ef,0_0_10px_#d5e3ef]">Modificar estilo de tabla: PRUEBA</h2>
        <button aria-label="Cerrar diálogo" className="mr-[-1px] ml-auto flex h-[17px] w-[44px] items-center justify-center self-start rounded-b-[4px] border border-[#5c1a12] bg-linear-to-b from-[#e0a193] via-[#cf4a30] to-[#c8452c] text-white">
          <Svg w={10} h={9}><path d="M1 1l8 7M9 1L1 8" strokeWidth="2.500" /></Svg>
        </button>
      </div>
      <div className="border border-[#5f7f9f] bg-[#f0f0f0] pt-[9px] pr-[9px] pb-[5px] pl-[7px]">
        <div className="flex">
          <div className="w-[243px]">
            <Group title="Tabla inicial" className="h-[46px]" inner="mt-[3px] mr-[9px] flex items-center gap-[6px] pl-[7px]">
              <span className="flex-1">Seleccionar tabla de inicio:</span>
              <IconButton name="Seleccionar tabla"><Svg><path d="M1 2.500h12M1 2v9h7M1 5h12v3M1 8h8M5 2v9M9 2v5" /><path d="M9 6v8l2-2 2 3 1-1-1.500-3H15z" fill="#fff" /></Svg></IconButton>
              <IconButton name="Quitar tabla" faded><Svg><path d="M1 2.500h12v5M1 2v9h8M1 5h12M1 8h12M5 2v9M9 2v6" /><path d="M10 9l5 5M15 9l-5 5" strokeWidth="2" /></Svg></IconButton>
            </Group>
            <Group title="General" className="mt-[7px] h-[60px]" inner="mt-[2px] mr-[7px] flex items-center pl-[7px]">
              <label htmlFor="direccion" className="flex-1">Dirección de tabla:</label>
              <Combo id="direccion" value="Abajo" className="w-[100px]" />
            </Group>
            <div className="mt-[7px] h-[222px] overflow-hidden border border-[#999] border-t-[#555] bg-black"><PreviewTable /></div>
          </div>

          <Group title="Estilos de celda" className="ml-[4px] h-[343px] w-[292px]" inner="px-[6px]">
            <div className="mt-[3px] flex items-center">
              <Combo id="celda" value="Título" className="mr-[8px] w-[162px]" />
              <span className="mr-[6px]"><IconButton name="Nuevo estilo"><Svg><path d="M1 2h11v11H1zM5 2v11M8.500 2v11M1 5.500h11M1 9h11" stroke="#667" /><circle cx="13" cy="3" r="2.500" fill="#f5a13a" stroke="#d4651a" /><path d="M6 15c3 0 3-4 5-4l3-3" stroke="#7a4a22" strokeWidth="2.500" /></Svg></IconButton></span>
              <IconButton name="Administrar estilos"><Svg><path d="M1 2h11v11H1zM5 2v11M8.500 2v11M1 5.500h11M1 9h11" stroke="#667" /><path d="M6 15c3 0 3-4 5-4l3-4" stroke="#7a4a22" strokeWidth="2.500" /></Svg></IconButton>
            </div>
            <div role="tablist" className="mt-[5px] flex h-[19px] items-end pl-[2px]">
              <button role="tab" className="h-[17px] w-[45px] border border-b-0 border-[#999] bg-linear-to-b from-[#f2f2f2] to-[#dcdcdc]">General</button>
              <button role="tab" className="h-[17px] w-[38px] border border-b-0 border-l-0 border-[#999] bg-linear-to-b from-[#f2f2f2] to-[#dcdcdc]">Texto</button>
              <button role="tab" aria-selected className="relative -mb-px h-[20px] w-[43px] border border-b-0 border-[#999] bg-white pb-[2px]">Bordes</button>
            </div>
            <div className="h-[214px] w-[271px] border border-[#999] bg-white px-[7px] pt-[3px]">
              <Group title="Propiedades" className="h-[202px]" inner="pr-[10px] pl-[7px]">
                <div className="flex flex-col gap-[3px]">
                  <div className="flex items-center">
                    <label htmlFor="grosor" className="w-[89px]">Grosor de línea:</label>
                    <Combo id="grosor" value="0.30 mm" className="w-[148px]" pad="pl-[49px]"><span className="absolute top-[9px] left-[8px] h-[3px] w-[35px] bg-black" /></Combo>
                  </div>
                  <div className="flex items-center">
                    <label htmlFor="tipo" className="w-[89px]">Tipo de línea:</label>
                    <Combo id="tipo" value="PorBloque" className="w-[148px]" pad="pl-[49px]"><span className="absolute top-[10px] left-[8px] h-px w-[35px] bg-black" /></Combo>
                  </div>
                  <div className="flex items-center">
                    <label htmlFor="color" className="w-[89px]">Color:</label>
                    <Combo id="color" value="Rojo" blue className="w-[148px]" pad="pl-[18px]">
                      <span className="absolute top-[5px] left-[4px] h-[11px] w-[11px] border border-black bg-[#f00]" />
                      <ColorMenu />
                      <span className="pointer-events-none absolute top-[-7px] left-[-12px] z-20 h-[80px] w-[82px] rounded-full bg-[#ff0] mix-blend-multiply" />
                      <Svg w={12} h={18} className="absolute top-[33px] left-[28px] z-30 text-[#555]"><path d="M1 1v13l3-3 2.500 6 2-1L6 10.500h5z" fill="#fff" /></Svg>
                    </Combo>
                  </div>
                </div>
                <label className="mt-[2px] flex h-[18px] items-center gap-[4px]">
                  <input type="checkbox" className="h-[12px] w-[12px] appearance-none border border-[#8e8f8f] bg-[#e6e6e6] shadow-[inset_0_0_0_1px_#fff]" />
                  Línea doble
                </label>
                <div className="flex h-[18px] items-center">Intervalo:</div>
                <div className="mt-[13px] flex gap-[7px] pl-[4px]">
                  {borderIcons.map(([name, d]) => (
                    <IconButton key={name} name={name}>
                      <Svg><path d="M2 2h12v12H2zM8 2v12M2 8h12" stroke="#ccd" strokeDasharray="1 1" /><path d={d} stroke="#35506e" strokeWidth="1.500" /></Svg>
                    </IconButton>
                  ))}
                </div>
                <p className="mt-[9px] w-[240px] leading-[12px]">Aplique las propiedades<br />haciendo clic en los botones</p>
              </Group>
            </div>
            <Group title="Vista preliminar de estilo" className="mt-[2px] h-[60px] w-[275px]" inner="px-[4px] pt-[2px]">
              <div className="flex h-[40px] justify-center border border-[#999] bg-black pt-[4px]">
                <table className="h-[32px] w-[127px] border-collapse text-center text-[10px] leading-[12px] font-bold text-white">
                  <tbody>
                    <tr><td className="border border-[#ddd] bg-[#2c2c2c] p-0">Título</td></tr>
                    <tr><td className="border border-[#ddd] bg-[#2c2c2c] p-0">Título</td></tr>
                  </tbody>
                </table>
              </div>
            </Group>
          </Group>
        </div>
        <div className="mt-[8px] mr-[2px] flex justify-end gap-[8px]">
          <PushButton primary>Aceptar</PushButton>
          <PushButton>Cancelar</PushButton>
          <PushButton>Ayuda</PushButton>
        </div>
      </div>
    </div>
  );
}

function InsertDialog() {
  return (
    <div role="dialog" aria-label="Insertar tabla" className="absolute top-[134px] left-[309px] w-[662px] rounded-[7px] border border-[#8d9299] bg-[radial-gradient(ellipse_130px_22px_at_40px_14px,rgba(150,158,165,0.7),rgba(150,158,165,0)),linear-gradient(180deg,#5a6570_0px,#20262c_12px,#0b0b0b_20px,#3c3c3c_26px,#111_60px,#000_100%)] px-[5px] pb-[4px] shadow-[inset_0_0_0_1px_#000]">
      <div className="flex h-[25px] items-center">
        <AcadIcon />
        <h2 className="ml-[5px] font-['Roboto',sans-serif] text-[11px] text-[#1a1a1a]">Insertar tabla</h2>
        <button aria-label="Cerrar" className="mr-[-2px] ml-auto flex h-[18px] w-[45px] items-center justify-center self-start rounded-b-[4px] border border-t-0 border-[#5c636b] bg-[#20252b] text-white">
          <Svg w={10} h={9}><path d="M1 1l8 7M9 1L1 8" strokeWidth="2.500" /></Svg>
        </button>
      </div>
      <div className="border border-[#888] bg-[#f0f0f0] px-[11px] pt-[6px] pb-[10px]">
        <div className="flex justify-between">
          <div className="w-[280px]">
            <Group title="Estilos" className="h-[48px]" inner="px-[7px] pt-[4px]">
              <Combo id="estilo" value="Standard" className="w-[180px]" />
            </Group>
            <Group title="Opciones" className="mt-[4px] h-[108px]" inner="px-[7px] pt-[3px]">
              {["Inicio", "Datos", "Datos"].map((t, i) => (
                <div key={i}>
                  <label className="flex h-[20px] items-center gap-[4px]">
                    <input type="radio" name="origen" defaultChecked={i === 0} className="h-[11px] w-[11px] appearance-none rounded-full border border-[#888] bg-white bg-clip-content p-[2px] checked:bg-[#1a75a8]" />
                    {t}
                  </label>
                  {i === 1 && <div className="mb-[7px] ml-[13px] h-[20px] w-[150px] rounded-[2px] border border-[#bbb] pt-[3px] pl-[3px] text-[#999]">Ninguno</div>}
                </div>
              ))}
            </Group>
            <Group className="mt-[6px] h-[234px]" inner="px-[7px]" title={<label className="flex items-center gap-[3px]"><input type="checkbox" defaultChecked className="peer hidden" /><Svg w={12} h={12} className="text-[#888]"><path d="M.5.5h11v11H.5z" fill="#fff" /><path d="M3 5l2.500 4L9 2" stroke="#3a4a9c" strokeWidth="2" /></Svg>Vista</label>}>
              <div className="mt-[5px] h-[206px] bg-black pt-[34px] pl-[7px]">
                <table className="h-[140px] w-[230px] border-collapse">
                  <tbody>
                    {Array.from({ length: 10 }, (_, r) => <tr key={r}><td className="border border-[#ddd] p-0" /></tr>)}
                  </tbody>
                </table>
              </div>
            </Group>
          </div>
          <div className="w-[330px]">
            <Group className="mt-[6px] h-[49px]" />
            <Group className="mt-[12px] h-[118px]" inner="pt-[91px] pr-[22px] text-right">líneas</Group>
            <Group className="mt-[13px] h-[87px]" />
          </div>
        </div>
        <div className="mt-[-18px] flex justify-end"><PushButton>Ayuda</PushButton></div>
      </div>
    </div>
  );
}

/* ---------- bottom bars ---------- */

function LayoutTabs() {
  return (
    <div className="flex h-[17px] items-stretch border-t border-[#999] bg-[#f0f0f0] pl-[3px] text-[#222]">
      <div className="flex text-[#333]">
        {["M2 1v8M9 1L4 5l5 4z", "M8 1L3 5l5 4z", "M3 1l5 4-5 4z", "M2 1l5 4-5 4zM9 1v8"].map((d, i) => (
          <button key={d} aria-label={`Presentación ${i + 1}`} className="flex w-[14px] items-center justify-center border-r border-[#bbb]"><Svg w={11} h={10}><path d={d} fill="#555" /></Svg></button>
        ))}
      </div>
      <button className="w-[54px] bg-black text-white [clip-path:polygon(0_0,100%_0,92%_100%,8%_100%)]">Modelo</button>
      <button className="w-[75px]">Presentación1</button>
      <Svg w={6} h={16}><path d="M5 0L1 16" /></Svg>
      <button className="w-[73px]">Presentación2</button>
      <Svg w={8} h={16}><path d="M7 0L1 16" /></Svg>
      <div className="ml-auto flex w-[446px] items-center border-l border-[#bbb] pl-[8px] text-black">
        <Caret className="rotate-90" />
        <span className="mr-[6px] ml-auto h-[13px] w-[14px] border border-[#aaa] bg-linear-to-b from-white to-[#ccc]" />
        <Caret className="mr-[22px] -rotate-90" />
      </div>
    </div>
  );
}

const modes: [string, boolean, ReactNode][] = [
  ["Inferencia", false, <><path d="M8 2v11M2 7h11" stroke="#222" /><path d="M6 5h4v4H6z" stroke="#222" /><circle cx="12" cy="12" r="2.500" stroke="#c44" /></>],
  ["Forzado", false, <><path d="M3 3h9M3 6h9M3 9h9M3 12h9" strokeDasharray="1 2" /><path d="M13.500 3v10H8" /></>],
  ["Rejilla", false, <path d="M1.500 1.500h13v13h-13zM4 1v14M7 1v14M9.500 1v14M12 1v14M1 4h14M1 7h14M1 9.500h14M1 12h14" stroke="#222" />],
  ["Orto", false, <path d="M2 1v13h14M2 10h4v4" />],
  ["Polar", false, <><circle cx="7" cy="9" r="5" strokeDasharray="22 6" /><path d="M7 9h8M7 9l6-7" strokeWidth="1.500" /></>],
  ["Referencia a objetos", true, <><path d="M3 3h11v11H3z" fill="#eef" strokeWidth="1.500" /><circle cx="3" cy="3" r="2" fill="#fff" stroke="#d07030" /></>],
  ["Referencia 3D", false, <><path d="M3 6l3-4h8v8l-3 4H3z" fill="#eef" /><circle cx="3" cy="13" r="2" fill="#fff" stroke="#d07030" /></>],
  ["Rastreo", true, <path d="M13 2L3 13h11M7 9l2 4" />],
  ["SCP dinámico", true, <><path d="M2 1v13h13M2 14l8-8M1 3l1-2 1 2M13 13l2 1-2 1" /><path d="M9 5l4-4v3h2l-4 4z" fill="#f5a623" stroke="#c87a10" /></>],
  ["Entrada dinámica", true, <><path d="M6 2v9M1 6h10" strokeWidth="1.500" /><path d="M8 8h7v4H8z" fill="#ccc" /></>],
  ["Grosor", false, <><path d="M8 2v6h6" strokeWidth="1" /><path d="M8 2v12M2 8h12" strokeWidth="2" stroke="#111" /></>],
  ["Transparencia", true, <><path d="M1.500 1.500h13v13h-13z" fill="#d7ecfa" stroke="#2a6db0" /><path d="M3 3.500h10M3 7.500h10M3 11.500h10" stroke="#7db4e2" strokeWidth="2" strokeDasharray="2 2" /><path d="M5 5.500h9M5 9.500h9" stroke="#7db4e2" strokeWidth="2" strokeDasharray="2 2" /></>],
  ["Propiedades rápidas", false, <path d="M4 2h8v12H4zM6 5h4M6 8h4M6 11h4" strokeWidth="1.500" />],
  ["Ciclo de selección", false, <><path d="M4 1v8M0 5h8" stroke="#222" /><path d="M5 5h6v6" /><path d="M8 8h7v7H8z" fill="#9cd67a" stroke="#2f7a1e" /></>],
  ["Monitor", false, <path d="M6 1h4v5h5v4h-5v5H6v-5H1V6h5z" fill="#fff" />],
];

function StatusButton({ name, className, children }: { name: string; className: string; children: ReactNode }) {
  return <button aria-label={name} className={`flex items-center justify-center border-r border-[#666] ${className}`}>{children}</button>;
}

function StatusBar() {
  return (
    <footer className="flex h-[22px] items-stretch border-t border-b-2 border-[#3d3d3d] bg-linear-to-b from-[#6e6e6e] to-[#999] text-[#111]">
      <div className="flex w-[184px] items-center bg-linear-to-b from-[#979797] to-[#8b8b8b] pt-[2px] pl-[12px]">3257.2440, 2336.4165, 0.0000</div>
      <div className="grid w-[309px] grid-cols-15 border-l border-[#666] text-[#333]">
        {modes.map(([name, on, art]) => (
          <StatusButton key={name} name={name} className={on ? "bg-[#b5dcea]" : "bg-[#b4b4b4]"}><Svg>{art}</Svg></StatusButton>
        ))}
      </div>
      <div className="ml-auto flex items-stretch text-[#222]">
        <button className="w-[49px] border-x border-[#666] bg-[#b4b4b4] font-['Roboto',sans-serif] text-[11px]">MODELO</button>
        <StatusButton name="Espacio modelo" className="w-[21px] bg-[#b4b4b4]"><Svg><path d="M3 1.500h11v10H3z" fill="#fff" /><path d="M6 9V4l4 5z" /><path d="M2 14h13" strokeWidth="2" /></Svg></StatusButton>
        <StatusButton name="Ventanas" className="w-[21px] bg-[#b4b4b4]"><Svg><path d="M1 3.500h6v7H1zM9 3.500h6v7H9z" fill="#fff" strokeWidth="1.500" /><path d="M2 14h12" strokeWidth="2" /></Svg></StatusButton>
        <button className="mr-px ml-[11px] flex w-[47px] items-center justify-center gap-[3px] bg-[#b4b4b4] font-['Roboto',sans-serif] text-[11px]"><Svg><path d="M7 1h2l1 7 5 6-2 1-5-4-5 4-2-1 5-6z" fill="#eee" /></Svg>1:1</button>
        <StatusButton name="Visibilidad de anotación" className="w-[21px] bg-[#b4b4b4]"><Svg><path d="M6 1h2l1 7 4 6-2 1-4-4-4 4-2-1 4-6z" fill="#eee" /><circle cx="13" cy="9" r="2.500" fill="#fbd34e" stroke="#b88a10" /></Svg></StatusButton>
        <StatusButton name="Escala automática" className="w-[21px] bg-[#b4b4b4] text-[#777]"><Svg><path d="M6 1h2l1 7 5 6-2 1-4-4-4 4-2-1 4-6zM12 2l-3 5h4l-3 5" fill="#ccc" /></Svg></StatusButton>
        <StatusButton name="Espacio de trabajo" className="ml-[6px] w-[20px] bg-[#b4b4b4]"><Svg><circle cx="8" cy="8" r="4.500" fill="#eee" strokeWidth="1.500" /><circle cx="8" cy="8" r="1.500" /><circle cx="8" cy="8" r="6.500" strokeWidth="2" strokeDasharray="2.500 2.600" /></Svg></StatusButton>
        <StatusButton name="Bloquear" className="w-[21px] bg-[#b4b4b4]"><Svg><path d="M2 7.500h8v6H2z" fill="#eee" /><path d="M8 7V4a3 3 0 016 0v3M6 9v3" strokeWidth="1.500" /></Svg></StatusButton>
        <StatusButton name="Hardware" className="w-[21px] bg-[#b4b4b4]"><Svg><path d="M1 4h12v6H1zM3 2v2M6 2v2M9 2v2M3 10v2M6 10v2" fill="#5d7fa8" /><circle cx="13" cy="11" r="2.500" fill="#fbd34e" stroke="#b88a10" /></Svg></StatusButton>
        <StatusButton name="Aislar objetos" className="w-[23px] border border-[#555] bg-[#cfcabb]"><Svg><path d="M8 1.500a4 4 0 012.500 7.200V12h-5V8.700A4 4 0 018 1.500z" fill="#fff3a8" stroke="#8a7c30" /><path d="M6 14h4" strokeWidth="2" /></Svg></StatusButton>
        <span className="mr-[5px] ml-[7px] flex items-center text-black"><Caret /></span>
        <button aria-label="Pantalla limpia" className="mr-[4px] flex items-center"><Svg><path d="M1.500 1.500h13v12h-13z" fill="#f5f5f5" stroke="#445" /><path d="M2 3h12" stroke="#8fa6c4" strokeWidth="2" /></Svg></button>
      </div>
    </footer>
  );
}

export default function App() {
  return (
    <div className="relative flex h-screen flex-col overflow-hidden bg-black font-['Roboto','Open_Sans',sans-serif]">
      <Header />
      <Ribbon />
      <div className="h-[5px] shrink-0 border-b border-[#333] bg-[#858585]" />
      <DrawingArea />
      <div className="font-['Liberation_Sans',sans-serif] text-[10px] leading-[13px]">
        <LayoutTabs />
        <StatusBar />
      </div>
      <div className="font-['Liberation_Sans',sans-serif] text-[10px] leading-[13px] text-black">
        <InsertDialog />
        <StyleDialog />
      </div>
    </div>
  );
}
